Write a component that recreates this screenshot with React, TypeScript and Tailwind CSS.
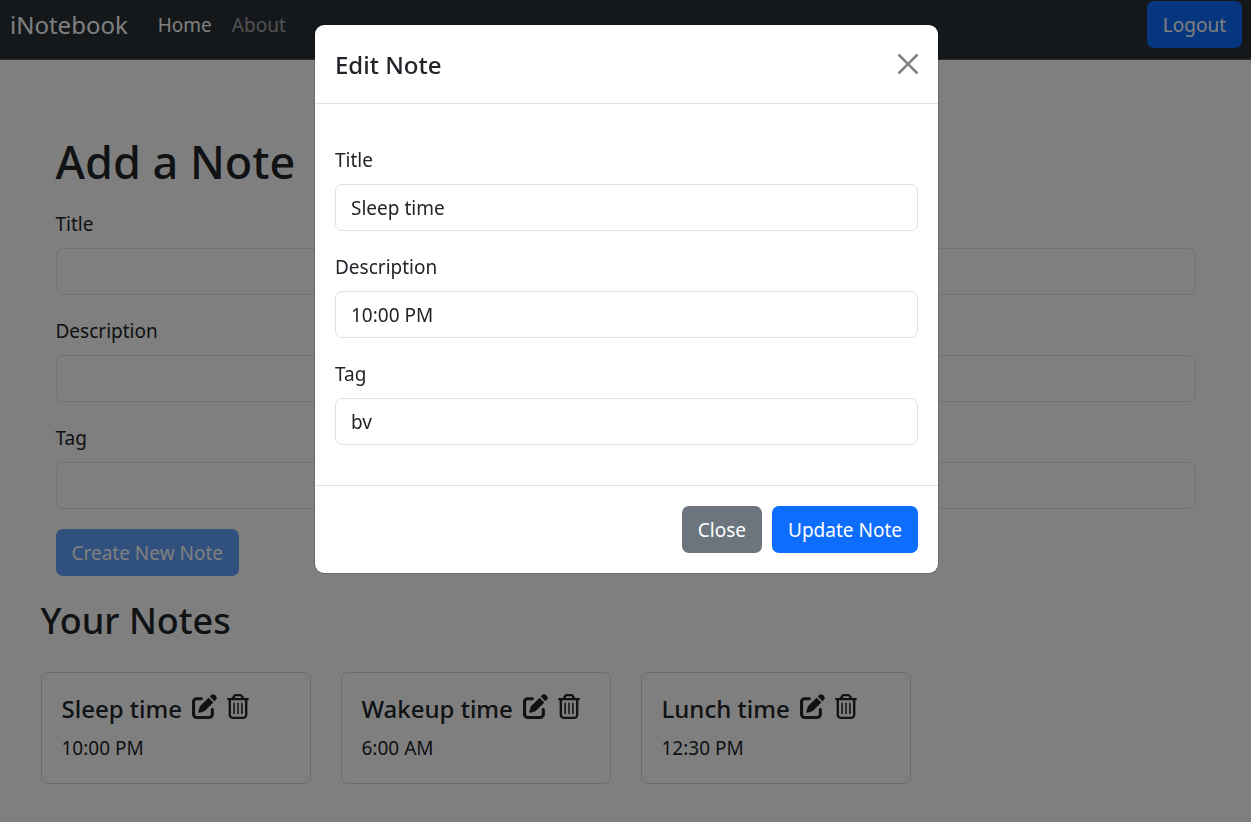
import { useState } from "react";
import { FaPenToSquare, FaRegTrashCan } from "react-icons/fa6";

type Note = { title: string; description: string; tag: string };

const notes: Note[] = [
  { title: "Sleep time", description: "10:00 PM", tag: "bv" },
  { title: "Wakeup time", description: "6:00 AM", tag: "" },
  { title: "Lunch time", description: "12:30 PM", tag: "" },
];

function Field({ id, label, initial = "" }: { id: string; label: string; initial?: string }) {
  const [value, setValue] = useState(initial);
  return (
    <div className="mb-5">
      <label htmlFor={id} className="mb-2 block leading-[32px]">
        {label}
      </label>
      <input
        id={id}
        type="text"
        value={value}
        onChange={(e) => setValue(e.target.value)}
        className="block h-[47px] w-full rounded-[7px] border border-[#dee2e6] bg-white px-[15px] text-[#212529] outline-none focus:border-[#86b7fe]"
      />
    </div>
  );
}

function Navbar() {
  return (
    <nav className="flex items-center justify-between border-b border-[#565a5e] bg-[#2b3035] pt-px pr-[9px] pb-[11px] pl-2.5">
      <div className="flex items-center">
        <a href="#" className="mr-[30px] text-[24px] text-white">
          iNotebook
        </a>
        <div className="flex gap-5">
          <a href="#home" className="text-white">
            Home
          </a>
          <a href="#about" className="text-white/55">
            About
          </a>
        </div>
      </div>
      <button type="button" className="h-[47px] rounded-[7px] bg-[#0d6efd] px-4 text-white">
        Logout
      </button>
    </nav>
  );
}

function NoteCard({ note }: { note: Note }) {
  return (
    <article className="rounded-[7px] border border-black/17 p-5">
      <h5 className="mb-2 flex items-center text-[24px] leading-[32px] font-medium">
        {note.title}
        <button type="button" aria-label="Edit note" className="mb-1.5 ml-2.5">
          <FaPenToSquare size={25} />
        </button>
        <button type="button" aria-label="Delete note" className="mb-1.5 ml-2.5">
          <FaRegTrashCan size={25} className="w-[22px]" />
        </button>
      </h5>
      <p>{note.description}</p>
    </article>
  );
}

function EditDialog() {
  return (
    <div className="fixed inset-0 overflow-hidden bg-black/50 pt-6 pl-0.5">
      <div
        role="dialog"
        aria-modal="true"
        aria-labelledby="dialog-title"
        className="mx-auto max-w-[625px] rounded-[10px] border border-black/17 bg-white bg-clip-padding"
      >
        <header className="flex items-center justify-between border-b border-[#dee2e6] p-5">
          <h2 id="dialog-title" className="pt-0.5 text-[24px] leading-[36px] font-medium">
            Edit Note
          </h2>
          <button type="button" aria-label="Close dialog" className="text-black/50">
            <svg width="20" height="20" viewBox="0 0 16 16" fill="currentColor">
              <path d="M.293.293a1 1 0 0 1 1.414 0L8 6.586 14.293.293a1 1 0 1 1 1.414 1.414L9.414 8l6.293 6.293a1 1 0 0 1-1.414 1.414L8 9.414l-6.293 6.293a1 1 0 0 1-1.414-1.414L6.586 8 .293 1.707a1 1 0 0 1 0-1.414z" />
            </svg>
          </button>
        </header>
        <form className="px-5 pt-10 pb-5">
          <Field id="edit-title" label="Title" initial={notes[0].title} />
          <Field id="edit-description" label="Description" initial={notes[0].description} />
          <Field id="edit-tag" label="Tag" initial={notes[0].tag} />
        </form>
        <footer className="flex justify-end gap-2.5 border-t border-[#dee2e6] p-5">
          <button type="button" className="h-[47px] rounded-[7px] bg-[#6c757d] px-4 text-white">
            Close
          </button>
          <button type="button" className="h-[47px] rounded-[7px] bg-[#0d6efd] px-4 text-white">
            Update Note
          </button>
        </footer>
      </div>
    </div>
  );
}

export default function App() {
  return (
    <div className="min-h-screen bg-white font-['Noto_Sans',sans-serif] text-[19px] leading-[30px] text-[#212529]">
      <Navbar />
      <main className="mx-auto max-w-[1200px] px-[15px] pt-[74px] pb-9">
        <section className="px-[15px]">
          <h1 className="mb-[18px] text-[45px] leading-[56px] font-medium">Add a Note</h1>
          <form>
            <Field id="title" label="Title" />
            <Field id="description" label="Description" />
            <Field id="tag" label="Tag" />
            <button
              type="button"
              disabled
              className="h-[47px] rounded-[7px] bg-[#0d6efd] px-4 text-white opacity-65"
            >
              Create New Note
            </button>
          </form>
        </section>
        <section className="pt-[22px]">
          <h2 className="mb-[29px] text-[36px] leading-[45px] font-medium">Your Notes</h2>
          <div className="grid grid-cols-4 gap-[30px]">
            {notes.map((note) => (
              <NoteCard key={note.title} note={note} />
            ))}
          </div>
        </section>
      </main>
      <EditDialog />
    </div>
  );
}
